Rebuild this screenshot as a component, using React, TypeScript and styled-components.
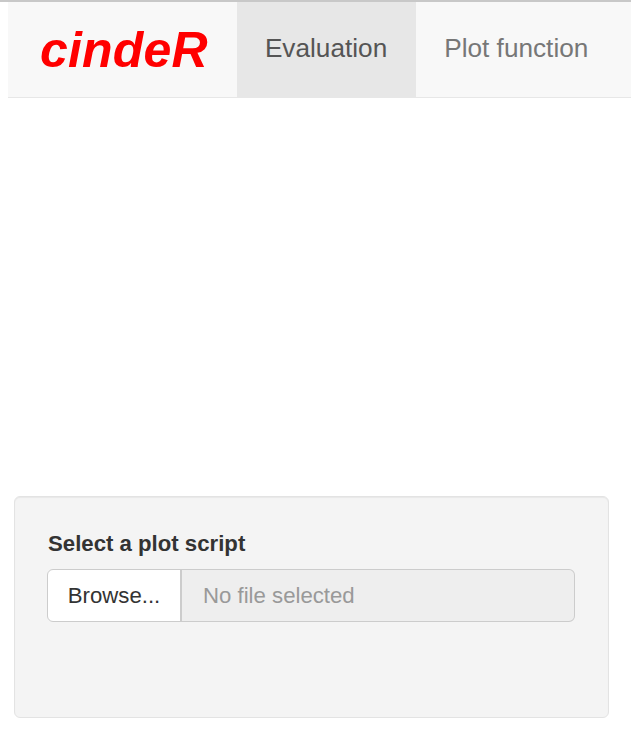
import React from 'react';
import styled, { createGlobalStyle } from 'styled-components';

const GlobalStyle = createGlobalStyle`
  html, body {
    margin: 0;
    padding: 0;
    background: #fff;
    font-family: "Liberation Sans", Arial, sans-serif;
    color: #333;
  }
`;

const Page = styled.div`
  border-top: 2px solid #c8c8c8;
  min-height: 732px;
  overflow: hidden;
`;

const Navbar = styled.nav`
  display: flex;
  align-items: stretch;
  height: 95px;
  margin-left: 8px;
  background: #f8f8f8;
  border-bottom: 1px solid #e7e7e7;
  white-space: nowrap;
`;

const Brand = styled.div`
  display: flex;
  align-items: center;
  padding: 0 29px 0 32px;
  font-size: 50px;
  font-weight: bold;
  font-style: italic;
  color: #ff0000;
  letter-spacing: 0.2px;
`;

const Tab = styled.div<{ $active?: boolean }>`
  display: flex;
  align-items: center;
  padding: 0 29px 2px 28px;
  font-size: 26.2px;
  color: ${p => (p.$active ? '#555' : '#777')};
  background: ${p => (p.$active ? '#e7e7e7' : 'transparent')};
`;

const PlotArea = styled.div`
  height: 398px;
`;

const Well = styled.div`
  box-sizing: border-box;
  margin-left: 14px;
  width: 595px;
  height: 222px;
  padding: 31px 33px 30px 32px;
  background: #f4f4f4;
  border: 1px solid #e3e3e3;
  border-radius: 6px;
  box-shadow: inset 0 1px 1px rgba(0, 0, 0, 0.05);
`;

const Label = styled.label`
  display: block;
  font-size: 22.2px;
  font-weight: bold;
  line-height: 32px;
  margin: 0 0 9px 1px;
  color: #333;
`;

const InputGroup = styled.div`
  display: flex;
  height: 53px;
`;

const BrowseButton = styled.div`
  box-sizing: border-box;
  display: flex;
  align-items: center;
  justify-content: center;
  width: 134px;
  font-size: 22.2px;
  color: #333;
  background: #fff;
  border: 1px solid #ccc;
  border-radius: 6px 0 0 6px;
`;

const FileName = styled.div`
  box-sizing: border-box;
  flex: 1;
  display: flex;
  align-items: center;
  padding-left: 21px;
  font-size: 22.2px;
  color: #999;
  background: #eee;
  border: 1px solid #ccc;
  border-left-width: 2px;
  border-radius: 0 6px 6px 0;
  margin-left: -1px;
`;

export default function App() {
  return (
    <Page>
      <GlobalStyle />
      <Navbar>
        <Brand>cindeR</Brand>
        <Tab $active>Evaluation</Tab>
        <Tab>Plot function</Tab>
      </Navbar>
      <PlotArea />
      <Well>
        <Label>Select a plot script</Label>
        <InputGroup>
          <BrowseButton>Browse...</BrowseButton>
          <FileName>No file selected</FileName>
        </InputGroup>
      </Well>
    </Page>
  );
}
